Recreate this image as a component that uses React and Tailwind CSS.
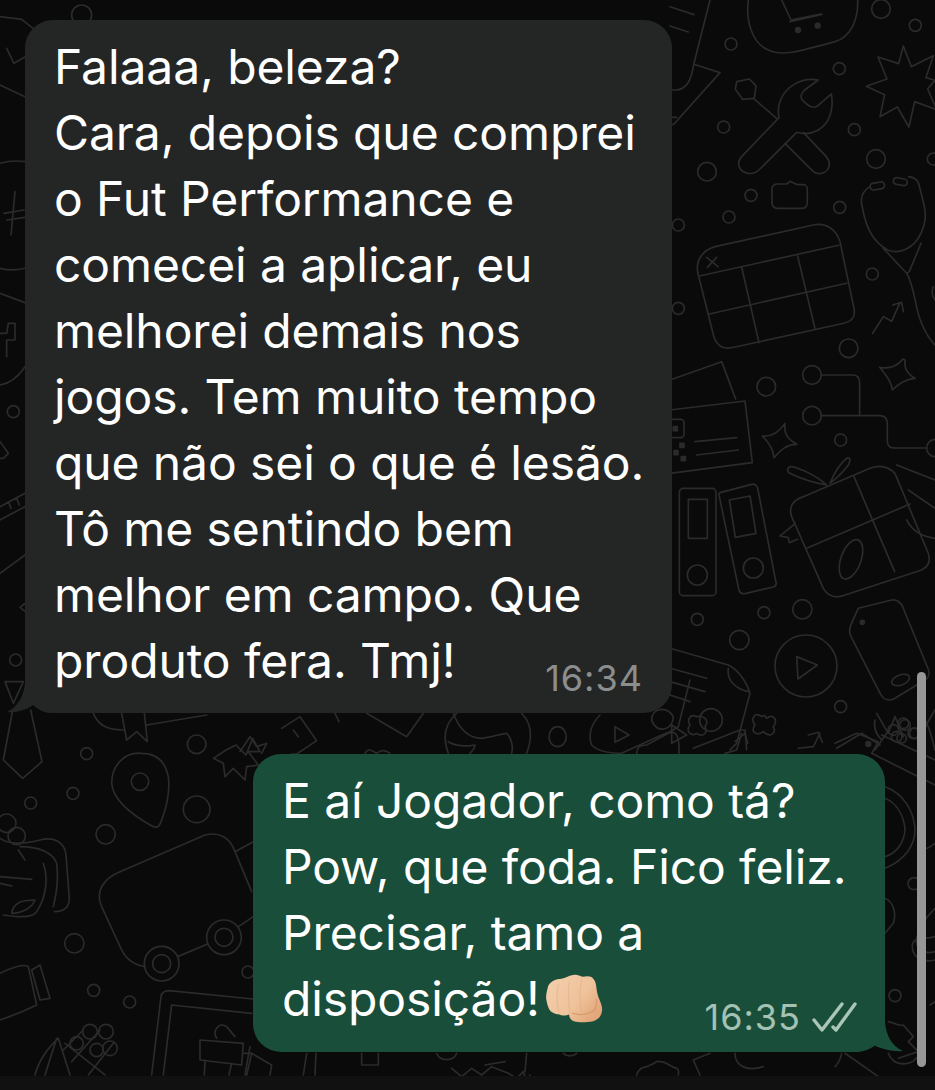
const leftLines = [
  "Falaaa, beleza?",
  "Cara, depois que comprei",
  "o Fut Performance e",
  "comecei a aplicar, eu",
  "melhorei demais nos",
  "jogos. Tem muito tempo",
  "que não sei o que é lesão.",
  "Tô me sentindo bem",
  "melhor em campo. Que",
];

const rightLines = ["E aí Jogador, como tá?", "Pow, que foda. Fico feliz.", "Precisar, tamo a"];

function Doodles() {
  return (
    <svg
      className="absolute inset-0"
      width="935"
      height="1090"
      viewBox="0 0 935 1090"
      fill="none"
      stroke="#2b2b2b"
      strokeLinecap="round"
      strokeLinejoin="round"
    >
      {/* top right, coords from 3x crop */}
      <g transform="translate(670 0) scale(0.3333)" strokeWidth="5">
        <path d="M235 0c-8 60 10 130 60 150 40 20 90 5 200-25 50-15 70-70 68-125" />
        <path d="M335 0l28 60 90-18M360 65l96-22" />
        <circle cx="384" cy="90" r="7" fill="#2b2b2b" />
        <circle cx="443" cy="77" r="7" fill="#2b2b2b" />
        <path d="M120 0L72 190c-8 45-18 82-60 80H0M72 193l78 25L12 372 0 376M0 352h20M0 20l72 24M0 78l55 18" />
        <circle cx="183" cy="132" r="18" />
        <circle cx="508" cy="206" r="18" />
        <circle cx="633" cy="27" r="28" />
        <circle cx="736" cy="76" r="18" />
        <path d="M700 138l24 62 66-33-22 66 27 8-22 26 27 62-66-24-17 76-35-60-52 29 14-66-55-25 62-22-27-66 62 20z" />
        <path d="M445 240c-50-10-105 20-118 75-3 15-2 28 0 38L215 470c-18 20-8 45 20 50 10 2 25-3 35-13l110-110c40 12 95-5 105-70 2-15 2-30-1-45l-40 35c-15 12-30 0-45-15-12-12-5-22 5-32z" />
        <path d="M345 430l85 85c15 12 45 5 48-20 1-12-5-20-12-28l-66-70" />
        <path d="M320 355L250 295M200 245l38-8 20 20-5 38-35 3-22-30z" />
        <circle cx="161" cy="381" r="18" />
        <circle cx="553" cy="389" r="18" />
        <circle cx="618" cy="477" r="28" />
        <circle cx="790" cy="477" r="18" />
        <circle cx="111" cy="515" r="28" />
        <circle cx="243" cy="586" r="18" />
        <circle cx="177" cy="651" r="18" />
        <circle cx="509" cy="622" r="18" />
        <circle cx="25" cy="675" r="18" />
        <circle cx="25" cy="925" r="18" />
        <circle cx="607" cy="822" r="18" />
        <circle cx="536" cy="1045" r="28" />
        <path d="M325 552h25l10-8 22 10h18c8 0 12 8 12 15v38c0 12-5 18-15 18h-75c-12 0-16-8-16-18v-40c0-8 6-15 19-15z" />
        <path d="M135 740L430 675c40-8 70 15 80 50l42 200c5 25-8 40-30 45l-330 72c-35 8-50-5-60-30L85 825c-12-45 15-75 50-85z" />
        <path d="M88 828l418-92M118 942l412-92M215 802l52 226M383 768l52 218M110 772l34 28M140 772l-28 30" />
        <path d="M600 560c-25 15-30 40-22 65 8 50 30 100 75 125 40 15 80-8 100-50 15-30 15-65 8-90l-15-60c-5-12-15-18-30-20" />
        <rect x="600" y="548" width="44" height="20" rx="10" transform="rotate(-10 622 558)" />
        <rect x="670" y="535" width="42" height="20" rx="10" transform="rotate(10 691 545)" />
        <path d="M640 745l70 75 8-5 35-85M710 820c25 40 25 110 45 150 10 25 25 50 40 65" />
        <path d="M608 1000l32-50 25 14 25-56M668 915l27-8 5 28" />
        <path d="M790 860c-5 10-5 30 5 40" />
      </g>

      {/* middle right */}
      <g transform="translate(670 360) scale(0.3333)" strokeWidth="5">
        <path d="M0 60L155 5l42 112M0 150l225-27 22 185L0 340" />
        <path d="M75 245l125-12M80 285l125-15" />
        <rect x="-8" y="178" width="50" height="55" rx="10" />
        <rect x="10" y="200" width="12" height="12" fill="#2b2b2b" />
        <rect x="30" y="250" width="12" height="12" fill="#2b2b2b" />
        <rect x="12" y="272" width="12" height="12" fill="#2b2b2b" />
        <rect x="34" y="290" width="12" height="12" fill="#2b2b2b" />
        <circle cx="289" cy="80" r="28" />
        <circle cx="426" cy="45" r="28" />
        <circle cx="426" cy="167" r="28" />
        <circle cx="512" cy="240" r="18" />
        <circle cx="796" cy="264" r="26" />
        <path d="M454 45h95c15 0 20 10 20 25v95M454 167h175c15 0 23 10 23 25v50c0 15 8 22 22 22h96" />
        <path d="M705 0c-2 25 5 40 30 55-25 2-45 12-68 35-2-22-15-40-38-68 25 5 50 0 70-25z" />
        <path d="M345 190c-4 28 5 45 35 63-30 0-45 15-68 40-2-25-12-42-35-65 30 2 50-10 68-38z" />
        <rect x="28" y="385" width="110" height="322" rx="12" />
        <rect x="55" y="418" width="57" height="117" />
        <circle cx="82" cy="645" r="30" />
        <path d="M150 398l95-25c10-2 15 3 18 12l55 282c2 8-2 12-8 14l-85 20c-10 2-15-3-18-10L148 410c-2-6-2-10 2-12z" />
        <path d="M178 420l62-12 18 112-62 12z" />
        <circle cx="250" cy="624" r="30" />
        <circle cx="82" cy="778" r="18" />
        <circle cx="282" cy="758" r="18" />
        <circle cx="397" cy="748" r="29" />
        <circle cx="208" cy="840" r="29" />
        <circle cx="408" cy="918" r="93" />
        <path d="M380 890l62 25-58 42z" />
        <circle cx="512" cy="1040" r="18" />
        <circle cx="123" cy="1080" r="34" />
        <path d="M400 410l200-85c30-12 55-5 75 15l100 240c8 25 0 40-20 50L525 705c-30 12-50 5-65-20L365 470c-10-30 5-50 35-60z" />
        <path d="M410 565l310-133M552 350l122 285" />
        <ellipse cx="543" cy="598" rx="30" ry="62" transform="rotate(20 543 598)" />
        <path d="M470 375c-30-5-70-15-110-35-15-10-5-25 15-18 35 12 70 30 95 53zM480 370c10-25 25-55 50-75 12-5 12 8 5 20-15 20-35 40-55 55z" />
        <path d="M375 490c-15 15-30 25-45 38l25 5 3 15 25-10" />
        <path d="M680 315l115 45M715 390l80 55M710 480c15 30 40 50 85 55" />
        <path d="M565 745l100-25c15-2 25 5 32 18l78 190c5 15 0 30-15 35l-90 55c-15 5-30 0-38-15l-90-175c-8-18-2-30 23-83z" />
        <circle cx="577" cy="787" r="6" fill="#2b2b2b" />
        <ellipse cx="692" cy="960" rx="28" ry="15" transform="rotate(-20 692 960)" />
        <path d="M0 865l175 50c30 15 55 50 65 85l-40 150-20 20M175 925c-5 30 15 60 60 70M0 925l110 30M0 965l105 30M0 1005l60 20" />
        <path d="M5 1095l45 30-45 25z" />
        <path d="M275 1070c-20-15-35 5-20 25-15 20 5 35 25 20 20 20 40 5 30-15 15-20 0-40-20-25-5-10-10-10-15-5z" />
        <path d="M385 1165l45-5 20-40M415 1125l30-8 12 30" />
        <path d="M70 1165l140-55 15 0 5 60M500 1165l75-45 55 35" />
        <path d="M620 1060l35 60 20-50 25 60M650 1120l-35 50" />
        <circle cx="700" cy="1090" r="16" />
        <circle cx="730" cy="1120" r="16" />
        <circle cx="680" cy="1130" r="16" />
        <path d="M750 1060c25 25 35 70 45 110M795 1050l-35 60" />
      </g>

      {/* bottom left */}
      <g transform="translate(0 710) scale(0.3333)" strokeWidth="5">
        <path d="M38 0L10 150l58 55 58-50L92 0" />
        <path d="M280 10c15 35 40 50 90 50M365 10l15 80 30-25 32 30-10-95M440 45L620 15" />
        <circle cx="260" cy="131" r="18" />
        <circle cx="590" cy="103" r="28" />
        <circle cx="219" cy="250" r="18" />
        <circle cx="92" cy="279" r="18" />
        <circle cx="317" cy="373" r="29" />
        <circle cx="590" cy="298" r="40" />
        <path d="M425 130c-55-5-90 40-90 90 5 55 70 100 125 130 15 5 20-5 25-20 15-40 25-90 20-130-10-50-40-70-80-70z" />
        <circle cx="420" cy="215" r="26" />
        <path d="M708 105l30 30 20-50 22 40-35 0 30 40-35 5-5 40-35-35-25 25-5-40-30-15 38-25z" />
        <circle cx="223" cy="700" r="29" />
        <circle cx="281" cy="841" r="18" />
        <circle cx="389" cy="876" r="18" />
        <circle cx="744" cy="786" r="18" />
        <path d="M0 385c20 15 60 20 120 5 40-10 75 5 78 45l10 130c0 25-15 40-45 40M0 500l95 8M0 520l35 8M130 460c15 40 10 100-20 145-10 15-35 20-100 10M60 410c60 0 100 20 110 50 5 40 0 90-10 130" />
        <path d="M35 610c5-30 25-40 70-40-10 25-40 40-70 40z" />
        <circle cx="20" cy="340" r="28" />
        <circle cx="50" cy="378" r="26" />
        <path d="M55 420l20 30" />
        <path d="M0 790c30-15 70-30 85-20l25 115c-30 15-80 35-110 45M95 780l25-15 30 100-30 5z" />
        <path d="M360 485l255-110c40-10 75 5 90 50l50 120" />
        <path d="M360 485c-50 20-75 60-55 105l60 130c15 30 35 45 70 50" />
        <circle cx="485" cy="761" r="52" />
        <circle cx="485" cy="761" r="27" />
        <circle cx="672" cy="682" r="52" />
        <circle cx="672" cy="682" r="27" />
        <path d="M533 740l90-38M715 650l45-30M705 425l55-30" />
        <path d="M455 1095l28-235c2-12 10-18 25-18l250 25M490 1095l25-210 240 25" />
        <path d="M600 990l130 10-5 65-125-15zM615 1050l-2 45M695 1060l-8 35M750 1010l-15 85M650 985c-15-25 10-50 30-35l25 30" />
        <path d="M105 1095c10-40 40-85 70-110l35 110M135 1095l35-110" />
        <path d="M195 1000l120 95M250 960l-60 60M300 960l-85 95M340 1000l-75 95" />
        <circle cx="270" cy="965" r="22" />
        <circle cx="318" cy="965" r="22" />
        <circle cx="330" cy="1015" r="22" />
        <circle cx="230" cy="1000" r="20" />
        <circle cx="290" cy="1020" r="20" />
      </g>

      {/* left strip */}
      <g transform="translate(0 0) scale(0.3333)" strokeWidth="5">
        <path d="M0 50l65 8 35 28M20 145l22 45 38-22M0 255l75 35" />
        <circle cx="245" cy="45" r="30" />
        <path d="M0 490c30-8 55-8 75-5M0 805c30 8 55 5 75 0M45 575l-12 130M12 640l60-10M20 660l55-8M0 880l75 28" />
        <path d="M0 1000h20l5-30 20 0 0 50h-25v50" />
      </g>
      <g transform="translate(0 360) scale(0.3333)" strokeWidth="5">
        <path d="M0 75c30-5 55-25 75-55" />
        <circle cx="40" cy="155" r="18" />
        <path d="M0 245l25 35-15 15H0" />
        <path d="M0 440l75-40M0 480l75-40M25 425l8 20M50 415l8 20M0 640l75-55M75 730l-15 12 15 12" />
        <circle cx="47" cy="900" r="18" />
        <path d="M15 965l55 0-30 65z" />
      </g>

      {/* strip under the first bubble */}
      <g transform="translate(240 700) scale(0.3333)" strokeWidth="5">
        <path d="M125 85l55-35 50 72-60 40-15 0M160 90l15 20M0 155l30-45 20 30 30-10-15 30" />
        <path d="M285 40l12 25M380 40l120 70 50-70" />
        <path d="M375 160c10-20 25-5 35 0 20-15 30-5 40 0" />
        <path d="M650 40c-40 35-40 80-25 120M845 40c35 35 30 80 15 120M640 40c15 40 40 75 85 75 40-5 60-15 75-15 15 15 20 40 15 60M625 125c25 15 50 15 80 10 0 10-10 20-15 25" />
        <ellipse cx="953" cy="110" rx="26" ry="30" />
        <path d="M1080 45c-30 30-35 65-25 90 25 25 75 25 90 25l120-55c15-5 30-10 50-25l35-140M1235 60c0-35 45-45 65-10 0 40-50 55-65 10z" />
        <path d="M1125 80l42 25-42 22z" />
        <path d="M1190 160c0-20 15-25 30-25l55-30c25-15 45-15 42 55" />
        <path d="M1370 50c-20-10-30 10-20 25-15 20 5 35 20 25 20 15 35-5 25-20 15-20-5-35-25-30z" />
        <path d="M1455 160l35-10 15-50M1485 125l30-25 8 30" />
      </g>

      {/* right of the second bubble */}
      <g transform="translate(835 720) scale(0.3333)" strokeWidth="5">
        <path d="M0 70l65-30 65 25-20 35 190 95M140 45l160 75M120 0c-5 25 5 45 20 60" />
        <circle cx="100" cy="72" r="7" fill="#2b2b2b" />
        <circle cx="175" cy="30" r="16" />
        <circle cx="210" cy="15" r="16" />
        <circle cx="240" cy="40" r="16" />
        <circle cx="200" cy="55" r="14" />
        <path d="M150 200c55 20 85 70 90 125 2 50-30 95-90 120M150 235c35 15 55 50 60 90 0 40-25 75-60 85M300 370c-20 15-35 25-50 5" />
        <circle cx="237" cy="491" r="18" />
        <circle cx="180" cy="827" r="18" />
        <path d="M150 535c25 10 35 45 25 75l-25 30" />
        <path d="M300 565c-30 30-50 60-55 90-5 30 20 50 55 40M300 650c-35 10-70 0-68 30 0 30 30 50 68 40M300 845l-15 10" />
        <path d="M160 905c25 5 30 15 45 10l30 35-15 15 30 30-60 20" />
        <path d="M20 1000c-5 25-15 35-20 40M30 1000l100 70M160 1000c15 40 70 45 95 0" />
      </g>

      {/* under the second bubble */}
      <g transform="translate(240 1030) scale(0.3333)" strokeWidth="5">
        <path d="M10 70l25 0 60 35-5 30M35 70l-15 65M190 135l10-65M225 135l3-65M365 70v35h50V70M590 70c10 25 50 25 60 0M635 115l30 25 30-25 30 20 30-25 50 20 25 15 20-20 10 30 10-20M735 105l60-10M860 70l-5 55M970 70c10 10 30 10 40 0M1190 135c10-30 30-20 40-30 15 0 15-15 30-10 20 0 30 15 50 20 10 5 5 15 5 20M1360 90l20 45M1360 90l50-20M1485 70c0 40 40 55 85 40" />
      </g>
    </svg>
  );
}

function Fist() {
  return (
    <svg className="ml-[4px]" width="60" height="52" viewBox="0 0 60 54">
      <defs>
        <linearGradient id="fistFill" x1="0" y1="0" x2="1" y2="0.7">
          <stop offset="0" stopColor="#f3d0ae" />
          <stop offset="0.65" stopColor="#efc29a" />
          <stop offset="1" stopColor="#e2a679" />
        </linearGradient>
      </defs>
      <path
        d="M3 14C5 9 11 6 17 6c4-1 7-3 12-4 4-1 7 1 10 2 5-1 9-1 11 2 3 3 3 8 4 14 1 6 4 10 5 15 1 7-2 13-9 15-6 1-14 2-20 0-3-1-5-3-5-7-3 1-7 2-10 0-3 0-6-1-9-3C3 37 2 32 1 26c0-4 1-8 2-12z"
        fill="url(#fistFill)"
      />
      <path d="M14 11c-2 8-2 19 0 29M25 9c-1 10-1 23 1 33M38 7c-2 10-2 24 0 33" stroke="#dba981" strokeWidth="1.2" fill="none" opacity="0.45" />
      <path d="M28 42c7 2 16 1 23-3 2-4 3-8 2-12" stroke="#d4946a" strokeWidth="1.4" fill="none" opacity="0.8" />
    </svg>
  );
}

export default function App() {
  return (
    <div className="relative flex h-[1090px] w-[935px] flex-col overflow-hidden bg-[#0a0a0a] font-['Inter',sans-serif] text-[48px] leading-[66px] tracking-[-0.1px] text-white">
      <Doodles />

      <div className="relative flex flex-1 flex-col items-start pl-[25px] pt-[20px]">
        {/* incoming */}
        <div className="relative w-[647px] rounded-[28px] bg-[#242626] pb-[19px] pl-[29px] pr-[29px] pt-[14px]">
          {leftLines.map((line) => (
            <div key={line} className="whitespace-nowrap">
              {line}
            </div>
          ))}
          <div className="flex items-end justify-between">
            <span className="whitespace-nowrap">produto fera. Tmj!</span>
            <span className="-mb-[4px] text-[36px] leading-[40px] tracking-[1px] text-[#8c8e8e]">16:34</span>
          </div>
          <svg className="absolute -left-[19px] bottom-0" width="50" height="30" viewBox="0 0 50 30">
            <path d="M19 0C18 12 12 24 1 29c9 1 19-2 26-7 6 5 11 8 18 8V0z" fill="#242626" />
          </svg>
        </div>

        {/* outgoing */}
        <div className="relative ml-[228px] mt-[41px] w-[632px] rounded-[28px] bg-[#194e3a] pb-[20px] pl-[29px] pr-[28px] pt-[14px]">
          {rightLines.map((line) => (
            <div key={line} className="whitespace-nowrap">
              {line}
            </div>
          ))}
          <div className="flex items-end justify-between">
            <div className="flex items-center">
              <span className="whitespace-nowrap">disposição!</span>
              <Fist />
            </div>
            <div className="-mb-[5px] flex items-center gap-[11px]">
              <span className="text-[36px] leading-[40px] tracking-[1px] text-[#a3c2b3]">16:35</span>
              <svg width="45" height="30" viewBox="0 0 45 30" fill="none" stroke="#a9c6b8" strokeWidth="3.4" strokeLinecap="round" strokeLinejoin="round">
                <path d="M2 18l8 10L30 2M21 25l3 3L43 2" />
              </svg>
            </div>
          </div>
          <svg className="absolute -right-[19px] bottom-0" width="50" height="30" viewBox="0 0 50 30">
            <path d="M31 0c1 12 6 24 18 29-9 1-21-2-30-6-6 5-12 7-19 7V0z" fill="#194e3a" />
          </svg>
        </div>
      </div>

      <div className="relative h-[14px] w-full bg-[#111111]" />

      {/* scrollbar */}
      <div className="absolute left-[917px] top-[672px] h-[395px] w-[9px] rounded-full bg-[#979797]" />
    </div>
  );
}
